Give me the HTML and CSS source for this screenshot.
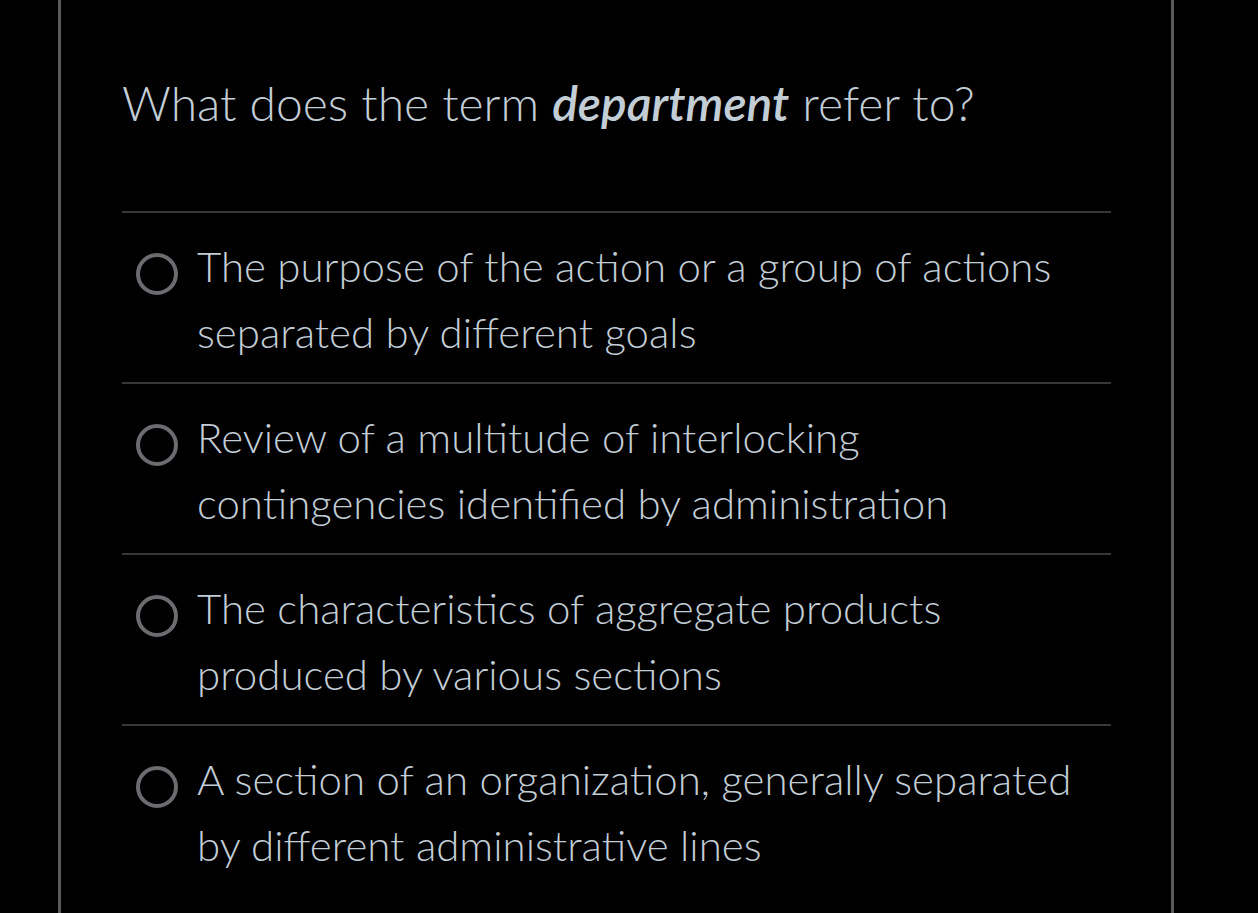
FILE: index.html
```html
<!DOCTYPE html>
<html lang="en">
<head>
<meta charset="utf-8">
<title>Question</title>
<link rel="stylesheet" href="styles.css">
</head>
<body>
<div class="frame">
  <h1 class="question">What does the term <em class="term">department</em> refer to?</h1>
  <ul class="options">
    <li class="option"><span class="radio"></span><span class="label">The purpose of the action or a group of actions separated by different goals</span></li>
    <li class="option"><span class="radio"></span><span class="label">Review of a multitude of interlocking contingencies identified by administration</span></li>
    <li class="option"><span class="radio"></span><span class="label">The characteristics of aggregate products produced by various sections</span></li>
    <li class="option"><span class="radio"></span><span class="label">A section of an organization, generally separated by different administrative lines</span></li>
  </ul>
</div>
</body>
</html>
```
FILE: styles.css
```css
html, body {
  margin: 0;
  padding: 0;
  background: #000;
  height: 100%;
}
body {
  font-family: "Lato Light", "Lato", "Liberation Sans", sans-serif;
  font-weight: 300;
  color: #c2cdd6;
  overflow: hidden;
}
.frame {
  box-sizing: border-box;
  margin-left: 58px;
  width: 1116px;
  min-height: 913px;
  border-left: 3px solid #5a5a5a;
  border-right: 3px solid #5a5a5a;
  padding: 74px 60px 0 61px;
}
.question {
  margin: 0;
  font-size: 48px;
  font-weight: 300;
  line-height: 1.2;
}
.term {
  font-family: "Lato Semibold", "Lato", sans-serif;
  font-style: italic;
  font-weight: 600;
}
.options {
  list-style: none;
  margin: 79px 0 0 0;
  padding: 0;
}
.option {
  display: flex;
  align-items: flex-start;
  border-top: 2px solid #383838;
  padding: 20px 0 17px 14px;
  font-size: 42px;
  font-weight: 300;
  line-height: 66px;
}
.radio {
  flex: none;
  box-sizing: border-box;
  width: 42px;
  height: 42px;
  margin-top: 20px;
  margin-right: 19px;
  border: 4px solid #6c6c70;
  border-radius: 50%;
}
.label {
  flex: 1;
}
```
